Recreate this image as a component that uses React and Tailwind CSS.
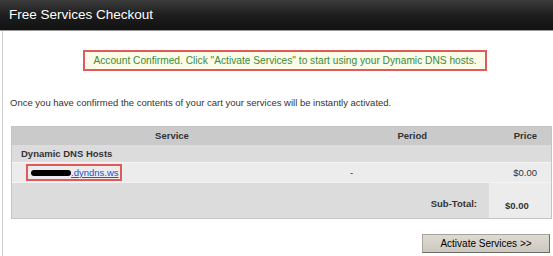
const App = () => {
  return (
    <div className="w-[553px] h-[256px] bg-white overflow-hidden" style={{ fontFamily: '"Liberation Sans", Arial, sans-serif' }}>
      <div className="h-[31px] bg-gradient-to-b from-[#3c3c3c] via-[#1e1e1e] to-[#111111] flex items-center pl-[9px] border-b border-[#9a9a9a]">
        <span className="text-white text-[13.5px] leading-none">Free Services Checkout</span>
      </div>

      <div className="ml-[2px] border-l border-[#cfcfcf] h-[225px] pt-[19px]">
        <div className="ml-[80px] w-[404px] h-[21px] border-2 border-[#e05a5a] bg-[#fbfbe8] flex items-center justify-center">
          <span className="text-[#3c8a3c] text-[10.2px]">
            Account Confirmed. Click "Activate Services" to start using your Dynamic DNS hosts.
          </span>
        </div>

        <p className="ml-[7px] mt-[25px] text-[9.5px] text-[#333]">
          Once you have confirmed the contents of your cart your services will be instantly activated.
        </p>

        <div className="ml-[8px] mt-[16px] w-[541px] border border-[#c4c4c4] bg-[#dcdcdc] text-[9.5px] text-[#333]">
          <div className="grid grid-cols-[320px_140px_1fr] h-[18px] items-center bg-[#cacaca] font-bold">
            <span className="text-center">Service</span>
            <span className="text-right pr-[45px]">Period</span>
            <span className="text-right pr-[14px]">Price</span>
          </div>
          <div className="h-[18px] flex items-center pl-[9px] font-bold border-b border-[#f4f4f4]">Dynamic DNS Hosts</div>
          <div className="grid grid-cols-[320px_140px_1fr] h-[20px] items-center bg-[#ececec] border-b border-[#f4f4f4]">
            <div className="pl-[14px]">
              <span className="inline-flex items-center h-[17px] w-[96px] border-2 border-[#e05a5a] pl-[3px]">
                <span className="w-[40px] h-[6px] rounded-full bg-black" />
                <span className="text-[#2a4fd0] underline">.dyndns.ws</span>
              </span>
            </div>
            <span className="pl-[18px]">-</span>
            <span className="text-right pr-[14px]">$0.00</span>
          </div>
          <div className="flex h-[35px]">
            <div className="flex-1 flex items-end justify-end pb-[7px] pr-[12px] font-bold">Sub-Total:</div>
            <div className="w-[62px] bg-[#ececec] flex items-end pb-[5px] pl-[16px] font-bold">$0.00</div>
          </div>
        </div>

        <div className="flex justify-end pr-[3px] mt-[15px]">
          <button className="w-[128px] h-[19px] bg-gradient-to-b from-[#dedad2] to-[#cdc9c0] border border-[#a8a49c] border-b-[#6e6b66] border-r-[#6e6b66] text-[10px] text-black leading-none">
            Activate Services &gt;&gt;
          </button>
        </div>
      </div>
    </div>
  );
};

export default App;
